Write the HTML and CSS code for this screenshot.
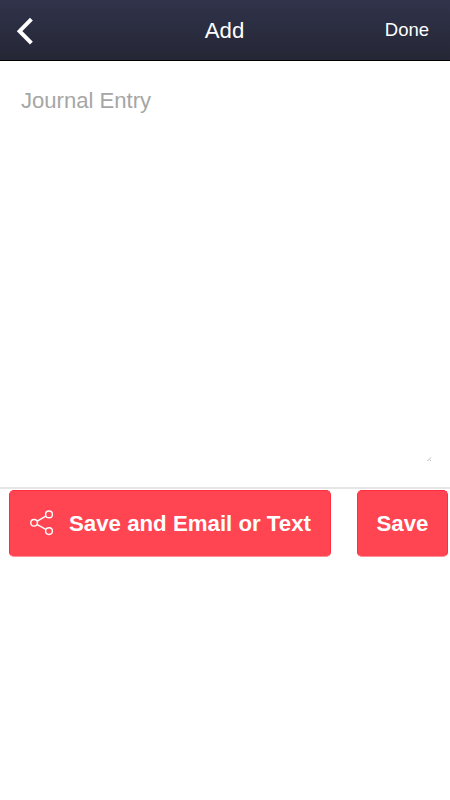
FILE: index.html
```
<!DOCTYPE html>
<html lang="en">
<head>
    <meta charset="UTF-8">
    <meta name="viewport" content="width=device-width, initial-scale=1.0">
    <title>Add</title>
    <link rel="stylesheet" href="styles.css">
</head>
<body>
    <header class="navbar">
        <button class="back" aria-label="Back">
            <svg width="18" height="28" viewBox="0 0 18 28"><path d="M15.4 2.2L3.6 14.2L15.4 26.2" /></svg>
        </button>
        <h1 class="title">Add</h1>
        <button class="done">Done</button>
    </header>

    <main>
        <div class="entry">
            <textarea class="entry-text" placeholder="Journal Entry"></textarea>
            <svg class="grip" width="5" height="5" viewBox="0 0 5 5"><path d="M.5 4L4 .5M3 4L4 3" /></svg>
        </div>
        <div class="actions">
            <button class="btn btn-share">
                <svg class="share-icon" width="24" height="26" viewBox="0 0 24 26">
                    <path d="M7.3 11.2L15.8 6.2M7.3 14.6L15.8 19.4" />
                    <circle cx="4.1" cy="12.8" r="3.3" />
                    <circle cx="19" cy="4.4" r="3.4" />
                    <circle cx="19" cy="21.1" r="3.4" />
                </svg>
                <span>Save and Email or Text</span>
            </button>
            <button class="btn btn-save">Save</button>
        </div>
    </main>
</body>
</html>
```
FILE: styles.css
```
* {
    box-sizing: border-box;
}
body {
    margin: 0;
    background-color: #fff;
    font-family: "Liberation Sans", Arial, sans-serif;
}
button {
    margin: 0;
    padding: 0;
    border: none;
    background: none;
    color: #fff;
    font-family: inherit;
    cursor: pointer;
}
.navbar {
    display: grid;
    grid-template-columns: 1fr auto 1fr;
    align-items: center;
    height: 61px;
    padding: 0 21px 0 20px;
    border-bottom: 1px solid #000;
    background: linear-gradient(#30334a, #252736);
    color: #fff;
}
.back {
    justify-self: start;
    height: 28px;
    margin: 2px 0 0 -4px;
}
.back svg {
    display: block;
    fill: none;
    stroke: #fff;
    stroke-width: 4;
}
.title {
    margin: 2px 0 0;
    font-size: 22.2px;
    font-weight: normal;
    line-height: 26px;
}
.done {
    justify-self: end;
    font-size: 18.5px;
    line-height: 22px;
}
.entry {
    display: flex;
    align-items: flex-end;
    height: 428px;
    padding: 15px 18px 25px 11px;
    border-bottom: 2px solid #e6e6e6;
}
.entry-text {
    flex: 1;
    height: 100%;
    padding: 12px 10px;
    border: none;
    outline: none;
    resize: none;
    background: none;
    font-family: inherit;
    font-size: 22.1px;
    line-height: 26px;
}
.entry-text::placeholder {
    color: #a6a6a6;
}
.grip {
    fill: none;
    stroke: #999;
    stroke-width: 0.7;
}
.actions {
    display: flex;
    justify-content: space-between;
    padding: 1px 2px 0 9px;
}
.btn {
    display: flex;
    align-items: center;
    height: 67px;
    border: 1px solid #ff2c42;
    border-bottom-color: #ff8f98;
    border-radius: 5px;
    background-color: #ff4551;
    font-size: 22.25px;
    font-weight: bold;
}
.btn-share {
    width: 322px;
    padding-left: 20px;
    gap: 15px;
}
.btn-save {
    width: 91px;
    justify-content: center;
}
.share-icon {
    margin-top: -2px;
    fill: none;
    stroke: #fff;
    stroke-width: 1.4;
}
```
